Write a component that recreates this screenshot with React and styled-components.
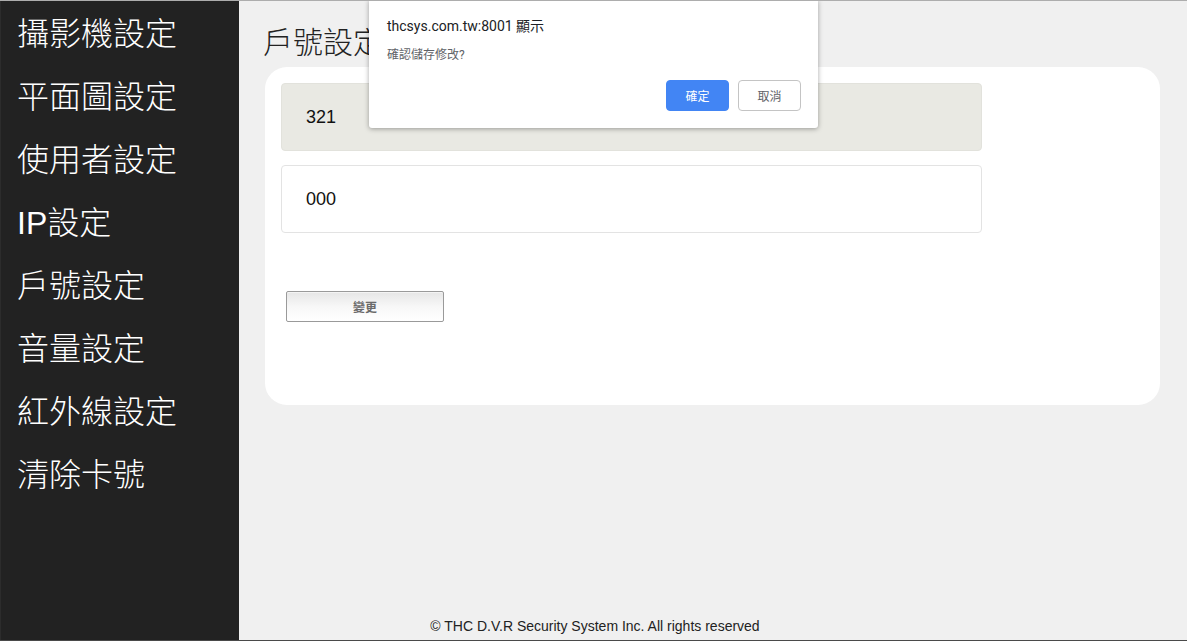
import React from 'react'
import styled, { createGlobalStyle } from 'styled-components'

const menu = ['攝影機設定', '平面圖設定', '使用者設定', 'IP設定', '戶號設定', '音量設定', '紅外線設定', '清除卡號']

const GlobalStyle = createGlobalStyle`
  html, body {
    margin: 0;
    padding: 0;
    background: #f0f0f0;
  }
  * {
    box-sizing: border-box;
  }
`

function App() {
  return (
    <Page>
      <GlobalStyle />
      <Sidebar>
        {menu.map((item) => (
          <MenuItem key={item}>{item}</MenuItem>
        ))}
      </Sidebar>
      <Main>
        <Title>戶號設定</Title>
        <Card>
          <Field $readonly>321</Field>
          <Field>000</Field>
          <ChangeButton>變更</ChangeButton>
        </Card>
        <Footer>© THC D.V.R Security System Inc. All rights reserved</Footer>
      </Main>
      <Dialog>
        <DialogTitle>thcsys.com.tw:8001 顯示</DialogTitle>
        <DialogMessage>確認儲存修改?</DialogMessage>
        <DialogActions>
          <DialogButton $primary>確定</DialogButton>
          <DialogButton>取消</DialogButton>
        </DialogActions>
      </Dialog>
    </Page>
  )
}

export default App

const Page = styled.div`
  position: relative;
  display: flex;
  width: 1187px;
  height: 641px;
  border-top: 1px solid #adadad;
  border-bottom: 1px solid #4a4a4a;
  background: #f0f0f0;
  overflow: hidden;
`

const Sidebar = styled.nav`
  width: 239px;
  flex-shrink: 0;
  display: flex;
  flex-direction: column;
  gap: 17px;
  padding: 10px 0 0 16px;
  background: #222222;
  border-left: 1px solid #2c2c2c;
`

const MenuItem = styled.div`
  color: #ffffff;
  font-family: "Liberation Sans", "Noto Sans CJK TC", sans-serif;
  font-weight: 300;
  font-size: 32px;
  line-height: 46px;
  height: 46px;
`

const Main = styled.main`
  flex: 1;
  display: flex;
  flex-direction: column;
  padding: 0 26px 0 26px;
`

const Title = styled.h1`
  margin: 22px 0 0 -2px;
  height: 44px;
  font-family: "Liberation Sans", "Noto Sans CJK TC", sans-serif;
  font-weight: 300;
  font-size: 30px;
  line-height: 40px;
  color: #222222;
`

const Card = styled.section`
  width: 895px;
  height: 338px;
  display: flex;
  flex-direction: column;
  gap: 14px;
  padding: 16px;
  background: #ffffff;
  border-radius: 22px;
`

const Field = styled.div`
  width: 701px;
  height: 68px;
  display: flex;
  align-items: center;
  padding-left: 24px;
  font-family: "Liberation Sans", Arial, sans-serif;
  font-size: 18px;
  color: #111111;
  background: ${(p) => (p.$readonly ? '#e9e9e3' : '#ffffff')};
  border: 1px solid ${(p) => (p.$readonly ? '#e2e2dc' : '#e3e3e3')};
  border-radius: 4px;
`

const ChangeButton = styled.button`
  margin: 44px 0 0 5px;
  width: 158px;
  height: 31px;
  font-family: "Liberation Sans", "Noto Sans CJK TC", sans-serif;
  font-size: 12px;
  font-weight: bold;
  color: #6b6b6b;
  background: linear-gradient(#e6e6e6, #f7f7f7 50%, #ffffff);
  border: 1px solid #9a9a9a;
  border-radius: 2px;
  box-shadow: inset 0 1px 0 #f4f4f4;
`

const Footer = styled.footer`
  margin-top: auto;
  padding: 0 236px 6px 0;
  text-align: center;
  font-family: "Liberation Sans", Arial, sans-serif;
  font-size: 14px;
  line-height: 16px;
  color: #222222;
`

const Dialog = styled.div`
  position: absolute;
  top: -1px;
  left: 369px;
  width: 449px;
  height: 128px;
  padding: 16px 17px 17px 18px;
  display: flex;
  flex-direction: column;
  background: #ffffff;
  border-radius: 0 0 3px 3px;
  box-shadow: 0 1px 5px rgba(0, 0, 0, 0.35);
`

const DialogTitle = styled.div`
  font-family: Roboto, "Noto Sans CJK TC", sans-serif;
  font-size: 14px;
  line-height: 20px;
  color: #202124;
`

const DialogMessage = styled.div`
  margin-top: 11px;
  font-family: Roboto, "Noto Sans CJK TC", sans-serif;
  font-size: 12px;
  line-height: 16px;
  color: #5f6368;
`

const DialogActions = styled.div`
  margin-top: auto;
  display: flex;
  justify-content: flex-end;
  gap: 9px;
`

const DialogButton = styled.button`
  width: 63px;
  height: 31px;
  font-family: Roboto, "Noto Sans CJK TC", sans-serif;
  font-size: 12px;
  color: ${(p) => (p.$primary ? '#ffffff' : '#5f6368')};
  background: ${(p) => (p.$primary ? '#4285f4' : '#ffffff')};
  border: 1px solid ${(p) => (p.$primary ? '#4285f4' : '#c4c4c4')};
  border-radius: 4px;
`
